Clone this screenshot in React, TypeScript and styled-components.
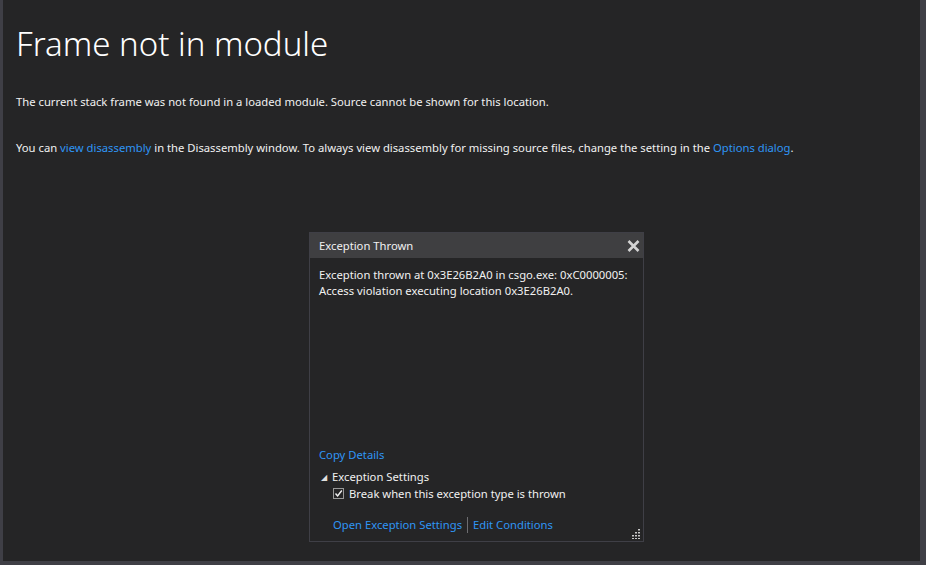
import React from "react"
import styled, { createGlobalStyle } from "styled-components"

const GlobalStyle = createGlobalStyle`
  html, body {
    margin: 0;
    padding: 0;
    background: #252526;
  }
  body {
    font-family: "Noto Sans", "Open Sans", sans-serif;
    color: #f1f1f1;
  }
`

const Window = styled.div`
  width: 926px;
  height: 565px;
  box-sizing: border-box;
  display: flex;
  flex-direction: column;
  background: #3f3f46;
`

const Body = styled.div`
  flex: 1;
  display: flex;
  margin-left: 3px;
  margin-right: 5px;
  margin-bottom: 4px;
  border-right: 1px solid #3f3f46;
  background: #252526;
`

const Page = styled.div`
  flex: 1;
  display: flex;
  flex-direction: column;
  padding: 22px 0 0 13px;
`

const Title = styled.h1`
  margin: 0;
  font-family: "Noto Sans", "Open Sans", sans-serif;
  font-weight: 300;
  font-size: 33px;
  line-height: 44px;
  color: #ffffff;
`

const Para = styled.p<{ $top: number }>`
  margin: ${(p) => p.$top}px 0 0 0;
  font-size: 11.25px;
  line-height: 16px;
  color: #f1f1f1;
  white-space: nowrap;
`

const Link = styled.a`
  color: #2f95f5;
  text-decoration: none;
  cursor: pointer;
`

const DialogWrap = styled.div`
  display: flex;
  justify-content: flex-start;
  padding-left: 293px;
  margin-top: 76px;
`

const Dialog = styled.div`
  width: 335px;
  height: 310px;
  box-sizing: border-box;
  border: 1px solid #3f3f46;
  background: #252526;
  display: flex;
  flex-direction: column;
  position: relative;
`

const DialogHeader = styled.div`
  height: 25px;
  background: #3f3f41;
  display: flex;
  align-items: center;
  justify-content: space-between;
  padding: 0 3px 0 9px;
  font-size: 11.25px;
  color: #f1f1f1;
`

const Close = styled.span`
  display: flex;
  align-items: center;
`

const DialogBody = styled.div`
  flex: 1;
  display: flex;
  flex-direction: column;
  padding: 9px 9px 8px 9px;
`

const Message = styled.div`
  flex: 1;
  font-size: 11.25px;
  line-height: 16px;
  color: #f1f1f1;
  white-space: nowrap;
`

const SettingsRow = styled.div<{ $indent: number }>`
  display: flex;
  align-items: center;
  gap: 5px;
  padding-left: ${(p) => p.$indent}px;
  font-size: 11.25px;
  line-height: 17px;
  color: #f1f1f1;
`

const Arrow = styled.span`
  font-size: 8px;
  color: #e0e0e0;
`

const Check = styled.span`
  width: 11px;
  height: 11px;
  border: 1px solid #999999;
  box-sizing: border-box;
  display: flex;
  align-items: center;
  justify-content: center;
  background: #252526;
`

const CopyLink = styled(Link)`
  font-size: 11.25px;
  line-height: 16px;
  margin-bottom: 5px;
`

const Footer = styled.div`
  display: flex;
  align-items: center;
  padding-left: 14px;
  margin-top: 15px;
  font-size: 11.25px;
  line-height: 16px;
`

const Sep = styled.span`
  width: 1px;
  height: 16px;
  background: #6d6d70;
  margin: 0 5px;
`

const Grip = styled.svg`
  position: absolute;
  right: 2px;
  bottom: 2px;
`

const gripDots = [
  [8, 0],
  [8, 3],
  [5, 3],
  [8, 6],
  [5, 6],
  [2, 6],
  [8, 9],
  [5, 9],
  [2, 9],
]

export default function App() {
  return (
    <>
      <GlobalStyle />
      <Window>
        <Body>
          <Page>
            <Title>Frame not in module</Title>
            <Para $top={28}>
              The current stack frame was not found in a loaded module. Source cannot be shown for this location.
            </Para>
            <Para $top={30}>
              You can <Link>view disassembly</Link> in the Disassembly window. To always view disassembly for missing
              source files, change the setting in the <Link>Options dialog</Link>.
            </Para>
            <DialogWrap>
              <Dialog>
                <DialogHeader>
                  <span>Exception Thrown</span>
                  <Close>
                    <svg width="13" height="12" viewBox="0 0 13 12">
                      <path d="M1.5 1 L11.5 11 M11.5 1 L1.5 11" stroke="#d4d4d4" strokeWidth="2.6" />
                    </svg>
                  </Close>
                </DialogHeader>
                <DialogBody>
                  <Message>
                    Exception thrown at 0x3E26B2A0 in csgo.exe: 0xC0000005:
                    <br />
                    Access violation executing location 0x3E26B2A0.
                  </Message>
                  <CopyLink>Copy Details</CopyLink>
                  <SettingsRow $indent={2}>
                    <Arrow>◢</Arrow>
                    <span>Exception Settings</span>
                  </SettingsRow>
                  <SettingsRow $indent={14}>
                    <Check>
                      <svg width="9" height="9" viewBox="0 0 9 9">
                        <path d="M1.5 4.5 L3.6 7 L7.8 1.5" stroke="#f1f1f1" strokeWidth="1.4" fill="none" />
                      </svg>
                    </Check>
                    <span>Break when this exception type is thrown</span>
                  </SettingsRow>
                  <Footer>
                    <Link>Open Exception Settings</Link>
                    <Sep />
                    <Link>Edit Conditions</Link>
                  </Footer>
                </DialogBody>
                <Grip width="10" height="10" viewBox="0 0 10 10">
                  {gripDots.map(([x, y]) => (
                    <rect key={`${x}-${y}`} x={x - 1} y={y} width="2" height="1.5" fill="#c8c8c8" />
                  ))}
                </Grip>
              </Dialog>
            </DialogWrap>
          </Page>
        </Body>
      </Window>
    </>
  )
}
